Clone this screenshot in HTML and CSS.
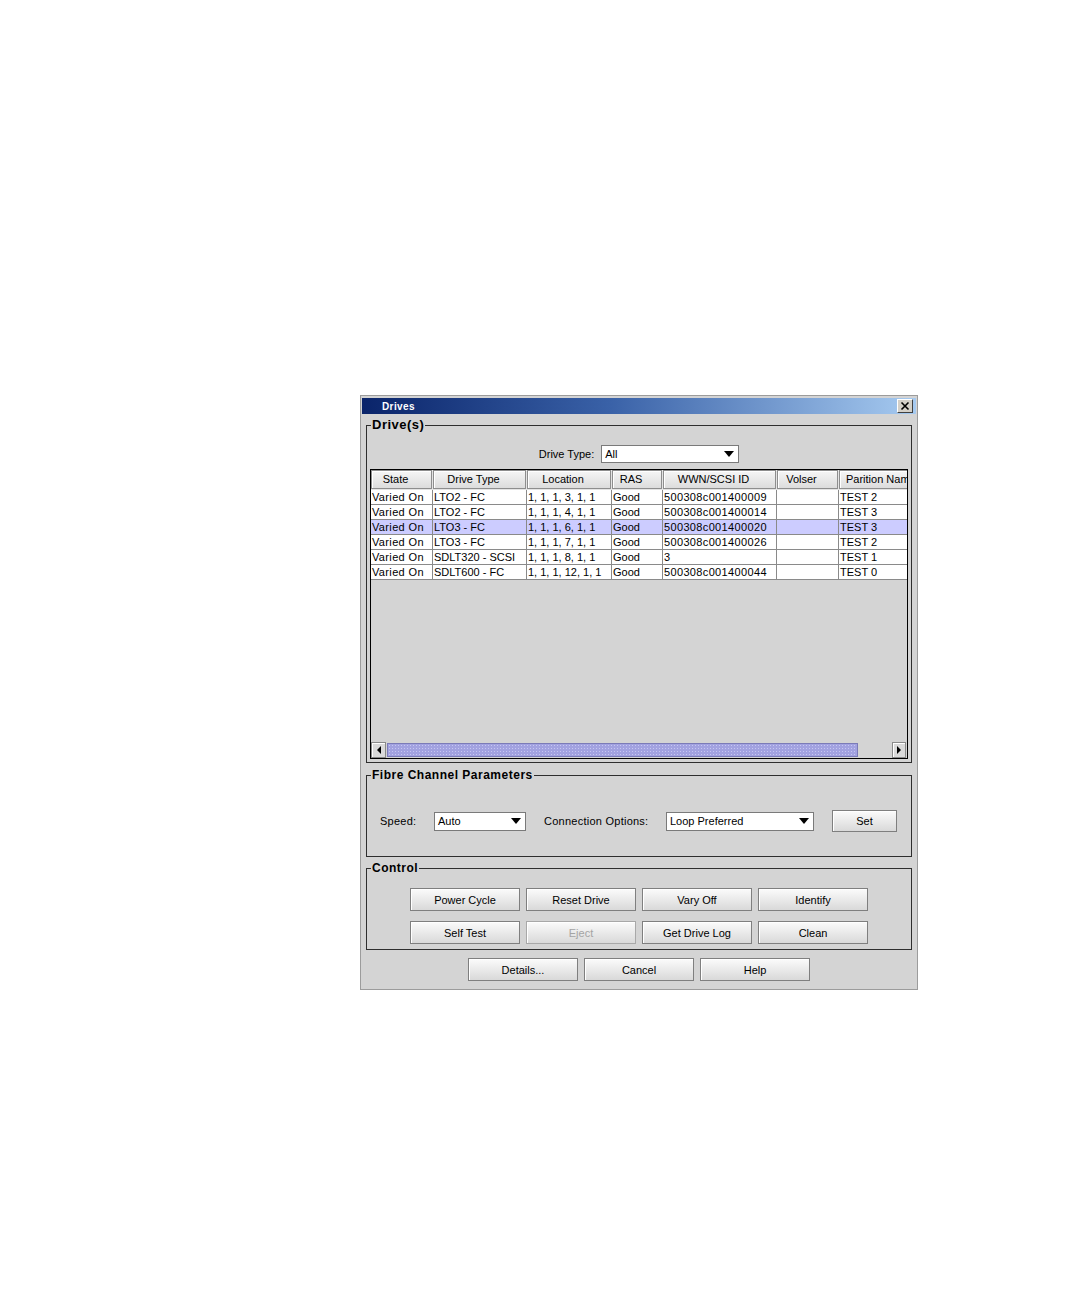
FILE: index.html
```html
<!DOCTYPE html>
<html>
<head>
<meta charset="utf-8">
<title>Drives</title>
<link rel="stylesheet" href="styles.css">
</head>
<body>
<div class="dialog">
  <div class="titlebar">
    <span class="title">Drives</span>
    <span class="close"><svg width="14" height="12" viewBox="0 0 14 12"><path d="M3.5 2.5 L10.5 9.5 M10.5 2.5 L3.5 9.5" stroke="#000" stroke-width="1.6" fill="none"/></svg></span>
  </div>
  <div class="content">
    <fieldset class="group group-drives">
      <legend class="legend legend-lg">Drive(s)</legend>
      <div class="type-row">
        <span class="lbl-type">Drive Type:</span>
        <div class="combo combo-type"><span>All</span><i class="arrow"></i></div>
      </div>
      <div class="pane">
        <div class="viewport">
          <div class="grid head">
            <div class="hc">State</div>
            <div class="hc">Drive Type</div>
            <div class="hc">Location</div>
            <div class="hc">RAS</div>
            <div class="hc">WWN/SCSI ID</div>
            <div class="hc">Volser</div>
            <div class="hc hc-left">Parition Name</div>
          </div>
          <div class="grid row">
            <div class="c">Varied On</div><div class="c">LTO2 - FC</div><div class="c">1, 1, 1, 3, 1, 1</div><div class="c">Good</div><div class="c">500308c001400009</div><div class="c"></div><div class="c">TEST 2</div>
          </div>
          <div class="grid row">
            <div class="c">Varied On</div><div class="c">LTO2 - FC</div><div class="c">1, 1, 1, 4, 1, 1</div><div class="c">Good</div><div class="c">500308c001400014</div><div class="c"></div><div class="c">TEST 3</div>
          </div>
          <div class="grid row selected">
            <div class="c">Varied On</div><div class="c">LTO3 - FC</div><div class="c">1, 1, 1, 6, 1, 1</div><div class="c">Good</div><div class="c">500308c001400020</div><div class="c"></div><div class="c">TEST 3</div>
          </div>
          <div class="grid row">
            <div class="c">Varied On</div><div class="c">LTO3 - FC</div><div class="c">1, 1, 1, 7, 1, 1</div><div class="c">Good</div><div class="c">500308c001400026</div><div class="c"></div><div class="c">TEST 2</div>
          </div>
          <div class="grid row">
            <div class="c">Varied On</div><div class="c">SDLT320 - SCSI</div><div class="c">1, 1, 1, 8, 1, 1</div><div class="c">Good</div><div class="c">3</div><div class="c"></div><div class="c">TEST 1</div>
          </div>
          <div class="grid row">
            <div class="c">Varied On</div><div class="c">SDLT600 - FC</div><div class="c">1, 1, 1, 12, 1, 1</div><div class="c">Good</div><div class="c">500308c001400044</div><div class="c"></div><div class="c">TEST 0</div>
          </div>
        </div>
        <div class="hscroll">
          <div class="sbtn"><i class="tri-left"></i></div>
          <div class="thumb"></div>
          <div class="track"></div>
          <div class="sbtn sbtn-right"><i class="tri-right"></i></div>
        </div>
      </div>
    </fieldset>

    <fieldset class="group group-fibre">
      <legend class="legend">Fibre Channel Parameters</legend>
      <div class="fibre-row">
        <span class="lbl lbl-speed">Speed:</span>
        <div class="combo combo-speed"><span>Auto</span><i class="arrow"></i></div>
        <span class="lbl lbl-conn">Connection Options:</span>
        <div class="combo combo-conn"><span>Loop Preferred</span><i class="arrow"></i></div>
        <div class="btn btn-set">Set</div>
      </div>
    </fieldset>

    <fieldset class="group group-control">
      <legend class="legend">Control</legend>
      <div class="btn-row">
        <div class="btn">Power Cycle</div>
        <div class="btn">Reset Drive</div>
        <div class="btn">Vary Off</div>
        <div class="btn">Identify</div>
      </div>
      <div class="btn-row btn-row-2">
        <div class="btn">Self Test</div>
        <div class="btn disabled">Eject</div>
        <div class="btn">Get Drive Log</div>
        <div class="btn">Clean</div>
      </div>
    </fieldset>

    <div class="btn-row bottom-row">
      <div class="btn">Details...</div>
      <div class="btn">Cancel</div>
      <div class="btn">Help</div>
    </div>
  </div>
</div>
</body>
</html>
```

FILE: styles.css
```css
body {
  margin: 0;
  background: #ffffff;
  font-family: "Liberation Sans", Arial, sans-serif;
  font-size: 11px;
  color: #000;
}

.dialog {
  margin: 395px 0 0 360px;
  width: 558px;
  box-sizing: border-box;
  border: 1px solid #9c9c9c;
  background: #d4d4d4;
  padding: 2px 0 8px;
}

.titlebar {
  margin: 0 1px;
  height: 16px;
  box-sizing: border-box;
  padding: 0 3px 0 20px;
  background: linear-gradient(to right, #0a246a 0%, #3a62a8 45%, #a6caf0 100%);
  display: flex;
  align-items: center;
  justify-content: space-between;
}

.title {
  color: #fff;
  font-weight: bold;
  font-size: 10px;
  letter-spacing: 0.4px;
  line-height: 16px;
  padding-top: 1px;
}

.close {
  width: 16px;
  height: 14px;
  box-sizing: border-box;
  background: #d4d0c8;
  border: 1px solid;
  border-color: #fff #404040 #404040 #fff;
  display: flex;
  align-items: center;
  justify-content: center;
}

.content {
  padding: 0 5px;
}

.group {
  margin: 0;
  padding: 0 2px;
  border: 1px solid #2e2e2e;
  min-width: 0;
}

.legend {
  margin-left: 2px;
  padding: 0 1px;
  font-weight: bold;
  font-size: 12px;
  line-height: 14px;
  letter-spacing: 0.5px;
}

.legend-lg {
  font-size: 13px;
  line-height: 16px;
}

.group-drives {
  margin-top: 3px;
  padding-bottom: 3px;
}

.type-row {
  margin-top: 12px;
  display: flex;
  justify-content: center;
  align-items: center;
  gap: 7px;
}

.lbl {
  letter-spacing: 0.25px;
}

.combo {
  position: relative;
  height: 18px;
  box-sizing: border-box;
  border: 1px solid #7a7a7a;
  background: #fff;
  padding-left: 3px;
  display: flex;
  align-items: center;
}

.combo-type {
  width: 138px;
}

.arrow {
  position: absolute;
  right: 4px;
  top: 5px;
  width: 0;
  height: 0;
  border-left: 5px solid transparent;
  border-right: 5px solid transparent;
  border-top: 6px solid #000;
}

.pane {
  margin: 6px 1px 0;
  height: 290px;
  box-sizing: border-box;
  border: 1px solid #000;
  background: #d4d4d4;
  display: flex;
  flex-direction: column;
}

.viewport {
  height: 272px;
  overflow: hidden;
}

.grid {
  display: grid;
  grid-template-columns: 62px 94px 85px 51px 114px 62px 108px;
  width: 576px;
}

.head {
  height: 20px;
  background: #e4e4e4;
}

.hc {
  box-sizing: border-box;
  height: 19px;
  margin-right: 1px;
  border: 1px solid #8e8e8e;
  box-shadow: inset 1px 1px 0 #ffffff;
  background: linear-gradient(#f6f6f6, #dcdcdc);
  text-align: center;
  padding-right: 12px;
  line-height: 17px;
  white-space: nowrap;
  overflow: hidden;
}

.hc-left {
  text-align: left;
  padding-left: 6px;
  padding-right: 0;
}

.row {
  height: 15px;
  background: #fff;
}

.row.selected {
  background: #ccccff;
}

.c {
  box-sizing: border-box;
  height: 15px;
  border-right: 1px solid #8a8a8a;
  border-bottom: 1px solid #8a8a8a;
  padding-left: 1px;
  line-height: 14px;
  white-space: nowrap;
  overflow: hidden;
}

.c:nth-child(1),
.c:nth-child(5) {
  letter-spacing: 0.35px;
}

.hscroll {
  height: 16px;
  display: flex;
  background: #d4d4d4;
}

.sbtn {
  width: 15px;
  height: 16px;
  box-sizing: border-box;
  border: 1px solid #8a8a8a;
  box-shadow: inset 1px 1px 0 #fff;
  background: #dadada;
  display: flex;
  align-items: center;
  justify-content: center;
  margin-right: 1px;
}

.sbtn-right {
  width: 14px;
  margin-right: 1px;
}

.tri-left {
  width: 0;
  height: 0;
  border-top: 4px solid transparent;
  border-bottom: 4px solid transparent;
  border-right: 4px solid #000;
}

.tri-right {
  width: 0;
  height: 0;
  border-top: 4px solid transparent;
  border-bottom: 4px solid transparent;
  border-left: 4px solid #000;
}

.thumb {
  width: 471px;
  height: 14px;
  margin-top: 1px;
  box-sizing: border-box;
  border: 1px solid #7b7bb8;
  background-color: #a2a2e0;
  background-image: radial-gradient(circle, #c6c6f2 0.8px, transparent 1px);
  background-size: 3px 3px;
}

.track {
  width: 34px;
}

.group-fibre {
  margin-top: 5px;
  padding-bottom: 24px;
}

.fibre-row {
  margin: 28px 0 0 11px;
  display: flex;
  align-items: center;
  height: 22px;
}

.lbl-speed {
  width: 54px;
}

.combo-speed {
  width: 92px;
  height: 19px;
}

.lbl-conn {
  margin-left: 18px;
  width: 122px;
}

.combo-conn {
  width: 148px;
  height: 19px;
}

.btn {
  width: 110px;
  height: 23px;
  box-sizing: border-box;
  border: 1px solid #7f7f7f;
  box-shadow: inset 1px 1px 0 #ffffff;
  background: linear-gradient(#fbfbfb, #d9d9d9);
  display: flex;
  align-items: center;
  justify-content: center;
  white-space: nowrap;
}

.btn-set {
  margin-left: 18px;
  width: 65px;
  height: 22px;
}

.btn.disabled {
  color: #a4a4a4;
  border-color: #a8a8a8;
}

.group-control {
  margin-top: 4px;
  padding-bottom: 5px;
}

.btn-row {
  display: flex;
  justify-content: center;
  gap: 6px;
  margin-top: 13px;
}

.btn-row-2 {
  margin-top: 10px;
}

.bottom-row {
  margin-top: 8px;
}
```
